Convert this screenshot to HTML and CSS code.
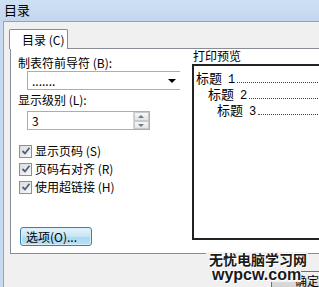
FILE: index.html
```html
<!DOCTYPE html>
<html lang="zh-CN">
<head>
    <meta charset="UTF-8">
    <meta name="viewport" content="width=device-width, initial-scale=1.0">
    <title>目录</title>
    <link rel="stylesheet" href="styles.css">
</head>
<body>
    <div class="window">
        <div class="titlebar">目录</div>
        <div class="client">
            <div class="tab">目录 (C)</div>
            <div class="panel">
                <div class="col-left">
                    <div class="label">制表符前导符 (B):</div>
                    <div class="combo">
                        <span class="combo-value">.......</span>
                        <span class="combo-arrow"></span>
                    </div>
                    <div class="label label-gap">显示级别 (L):</div>
                    <div class="spin">
                        <span class="spin-value">3</span>
                        <div class="spin-btns">
                            <span class="spin-up"></span>
                            <span class="spin-down"></span>
                        </div>
                    </div>
                    <div class="checks">
                        <label class="check"><span class="box"><svg width="10" height="10" viewBox="0 0 10 10"><path d="M1.5 5 L4 7.5 L8.5 1.8" fill="none" stroke="#4d6185" stroke-width="1.8"/></svg></span>显示页码 (S)</label>
                        <label class="check"><span class="box"><svg width="10" height="10" viewBox="0 0 10 10"><path d="M1.5 5 L4 7.5 L8.5 1.8" fill="none" stroke="#4d6185" stroke-width="1.8"/></svg></span>页码右对齐 (R)</label>
                        <label class="check"><span class="box"><svg width="10" height="10" viewBox="0 0 10 10"><path d="M1.5 5 L4 7.5 L8.5 1.8" fill="none" stroke="#4d6185" stroke-width="1.8"/></svg></span>使用超链接 (H)</label>
                    </div>
                    <button class="btn">选项(O)...</button>
                </div>
                <div class="col-right">
                    <div class="label">打印预览</div>
                    <div class="preview">
                        <div class="toc-line lvl1"><span>标题</span><span class="num">1</span><span class="leader"></span></div>
                        <div class="toc-line lvl2"><span>标题</span><span class="num">2</span><span class="leader"></span></div>
                        <div class="toc-line lvl3"><span>标题</span><span class="num">3</span><span class="leader"></span></div>
                    </div>
                </div>
            </div>
            <div class="footer">
                <button class="btn-ok">确定</button>
            </div>
        </div>
        <div class="watermark">
            <div class="wm-cn">无忧电脑学习网</div>
            <div class="wm-en">wypcw.com</div>
        </div>
    </div>
</body>
</html>
```

FILE: styles.css
```css
body {
    margin: 0;
    font-family: "Noto Sans CJK SC", "Liberation Sans", sans-serif;
    font-size: 12px;
    color: #000;
    background: #f0f0f0;
}
.window {
    position: relative;
    width: 319px;
    height: 287px;
    overflow: hidden;
    background: #c7daef;
}
.titlebar {
    height: 21px;
    line-height: 20px;
    padding-left: 4px;
    font-size: 13px;
    background: linear-gradient(#cfe0f3, #c2d7ee);
}
.client {
    margin-left: 3px;
    height: 265px;
    border-left: 1px solid #8fa3bb;
    border-top: 1px solid #8fa3bb;
    background: #f0f0f0;
    padding: 7px 0 0 5px;
}
.tab {
    position: relative;
    z-index: 1;
    box-sizing: border-box;
    width: 59px;
    height: 20px;
    line-height: 19px;
    padding-left: 12px;
    border: 1px solid #898c95;
    border-bottom: none;
    border-radius: 2px 2px 0 0;
    background: #fff;
}
.panel {
    display: flex;
    margin: -1px 0 0 1px;
    height: 204px;
    width: 330px;
    border: 1px solid #898c95;
    background: #fff;
}
.label {
    height: 14px;
    line-height: 14px;
}
.col-left {
    width: 174px;
    padding: 7px 0 0 7px;
}
.col-left > .label:first-child {
    margin-bottom: 1px;
}
.label-gap {
    margin: 3px 0 4px;
}
.combo {
    display: flex;
    align-items: center;
    margin-left: 9px;
    width: 153px;
    height: 19px;
    box-sizing: border-box;
    border: 1px solid #abadb3;
    border-right: none;
}
.combo-value {
    flex: 1;
    padding-left: 4px;
    line-height: 12px;
}
.combo-arrow {
    width: 0;
    height: 0;
    margin-right: 4px;
    border-left: 4px solid transparent;
    border-right: 4px solid transparent;
    border-top: 4px solid #000;
}
.spin {
    display: flex;
    margin-left: 9px;
    width: 123px;
    height: 19px;
    box-sizing: border-box;
    border: 1px solid #abadb3;
}
.spin-value {
    flex: 1;
    padding-left: 4px;
    line-height: 17px;
}
.spin-btns {
    display: flex;
    flex-direction: column;
    width: 15px;
    border-left: 1px solid #d5d5d5;
}
.spin-up,
.spin-down {
    flex: 1;
    position: relative;
    background: linear-gradient(#f6f6f6, #e4e4e4);
    border: 1px solid #c9c9c9;
}
.spin-up::after,
.spin-down::after {
    content: "";
    position: absolute;
    left: 3px;
    top: 2px;
    border-left: 3px solid transparent;
    border-right: 3px solid transparent;
}
.spin-up::after {
    border-bottom: 3px solid #6b7a8c;
}
.spin-down::after {
    border-top: 3px solid #6b7a8c;
}
.checks {
    display: flex;
    flex-direction: column;
    margin-top: 12px;
}
.check {
    display: flex;
    align-items: center;
    height: 18px;
    line-height: 14px;
    gap: 3px;
    margin-left: 1px;
}
.box {
    display: flex;
    align-items: center;
    justify-content: center;
    width: 13px;
    height: 13px;
    box-sizing: border-box;
    border: 1px solid #8e8f8f;
    background: linear-gradient(135deg, #dcdcdc, #f8f8f8);
}
.btn {
    display: block;
    margin: 31px 0 0 2px;
    width: 72px;
    height: 19px;
    padding: 0 0 0 5px;
    text-align: left;
    font: inherit;
    line-height: 15px;
    border: 1px solid #3c7fb1;
    border-radius: 3px;
    background: linear-gradient(#e6f4fb 0%, #c5e5f6 50%, #a9d9f2 51%, #b6e0f5 100%);
    box-shadow: inset 0 0 0 1px #d8eef9;
}
.col-right .label {
    padding-left: 1px;
}
.preview {
    margin-top: 1px;
    width: 140px;
    height: 168px;
    border: 2px solid #222;
    padding-top: 4px;
    font-size: 13px;
}
.toc-line {
    display: flex;
    align-items: baseline;
    height: 16px;
    line-height: 15px;
}
.num {
    margin-left: 6px;
    font-family: "Liberation Mono", monospace;
    font-size: 12px;
}
.lvl1 { padding-left: 2px; }
.lvl2 { padding-left: 14px; }
.lvl3 { padding-left: 23px; }
.leader {
    flex: 1;
    align-self: flex-end;
    margin: 0 0 3px 2px;
    border-bottom: 1px dotted #444;
}
.footer {
    padding: 17px 0 0 262px;
}
.btn-ok {
    display: block;
    width: 70px;
    height: 20px;
    font: inherit;
    line-height: 14px;
    padding: 0 0 0 23px;
    text-align: left;
    border: 1px solid #707070;
    border-radius: 3px;
    background: linear-gradient(#f2f2f2 0%, #ebebeb 50%, #dddddd 51%, #cfcfcf 100%);
}
.watermark {
    position: absolute;
    left: 206px;
    top: 252px;
    font-weight: bold;
    color: #1a1a1a;
    text-shadow: 1px 1px 0 #fff, -1px -1px 0 #fff;
}
.wm-cn,
.wm-en {
    width: fit-content;
    background: #f0f0f0;
}
.wm-cn {
    padding: 0 1px 0 3px;
    font-size: 14px;
    line-height: 15px;
}
.wm-en {
    margin-left: 4px;
    padding-left: 2px;
    font-family: "Liberation Sans", sans-serif;
    font-size: 16px;
    line-height: 15px;
}
```
